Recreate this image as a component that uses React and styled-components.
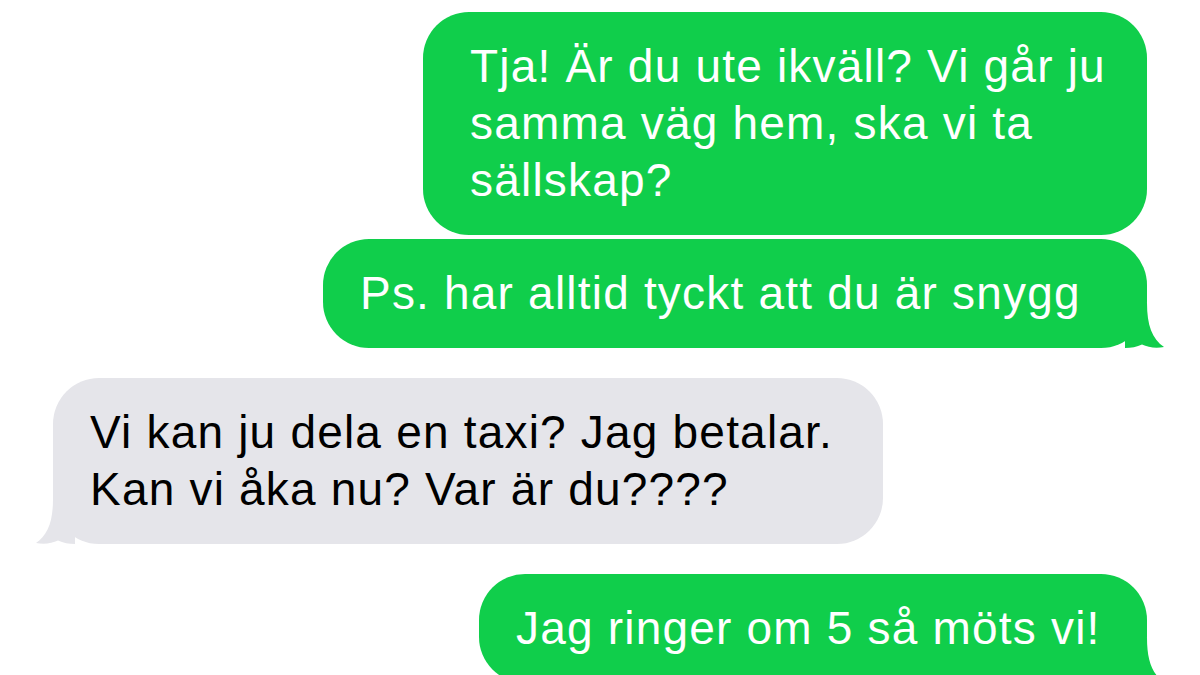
import React from "react";
import styled, { createGlobalStyle } from "styled-components";

const Global = createGlobalStyle`
  html, body {
    margin: 0;
    padding: 0;
    background: #ffffff;
  }
  body {
    font-family: "Liberation Sans", Arial, sans-serif;
  }
`;

const Screen = styled.div`
  width: 1200px;
  height: 675px;
  overflow: hidden;
  background: #ffffff;
  display: flex;
  flex-direction: column;
  padding: 12px 53px 0;
  box-sizing: border-box;
`;

const Row = styled.div`
  display: flex;
  justify-content: ${(p) => (p.$sent ? "flex-end" : "flex-start")};
  margin-top: ${(p) => p.$gap}px;
  flex-shrink: 0;
`;

const Bubble = styled.div`
  position: relative;
  box-sizing: border-box;
  width: ${(p) => p.$w}px;
  padding: 26px 20px 26px ${(p) => p.$pl}px;
  border-radius: 46px;
  background: ${(p) => (p.$sent ? "#10ce4b" : "#e5e5ea")};
  color: ${(p) => (p.$sent ? "#ffffff" : "#000000")};
  font-family: "Liberation Sans", Arial, sans-serif;
  font-size: 46px;
  line-height: 57px;
  letter-spacing: 1.2px;
  white-space: nowrap;
`;

const Tail = styled.svg`
  position: absolute;
  bottom: 0;
  width: 40px;
  height: 45px;
  ${(p) =>
    p.$sent
      ? "right: -18px;"
      : "left: -18px; transform: scaleX(-1);"}
  fill: ${(p) => (p.$sent ? "#10ce4b" : "#e5e5ea")};
`;

function BubbleTail({ sent }) {
  return (
    <Tail $sent={sent} viewBox="0 0 40 45">
      <path d="M0 0 L22 0 C22 22 27 36 39 44 C31 45.5 23 44.5 17 41.5 C12 44 6 45 0 45 Z" />
    </Tail>
  );
}

const messages = [
  {
    sent: true,
    gap: 0,
    w: 724,
    pl: 47,
    tail: false,
    lines: ["Tja! Är du ute ikväll? Vi går ju", "samma väg hem, ska vi ta", "sällskap?"],
  },
  {
    sent: true,
    gap: 4,
    w: 824,
    pl: 37,
    tail: true,
    lines: ["Ps. har alltid tyckt att du är snygg"],
  },
  {
    sent: false,
    gap: 30,
    w: 830,
    pl: 37,
    tail: true,
    lines: ["Vi kan ju dela en taxi? Jag betalar.", "Kan vi åka nu? Var är du????"],
  },
  {
    sent: true,
    gap: 30,
    w: 668,
    pl: 37,
    tail: true,
    lines: ["Jag ringer om 5 så möts vi!"],
  },
];

export default function App() {
  return (
    <>
      <Global />
      <Screen>
        {messages.map((m, i) => (
          <Row key={i} $sent={m.sent} $gap={m.gap}>
            <Bubble $sent={m.sent} $w={m.w} $pl={m.pl}>
              {m.lines.map((l, j) => (
                <React.Fragment key={j}>
                  {j > 0 && <br />}
                  {l}
                </React.Fragment>
              ))}
              {m.tail && <BubbleTail sent={m.sent} />}
            </Bubble>
          </Row>
        ))}
      </Screen>
    </>
  );
}
